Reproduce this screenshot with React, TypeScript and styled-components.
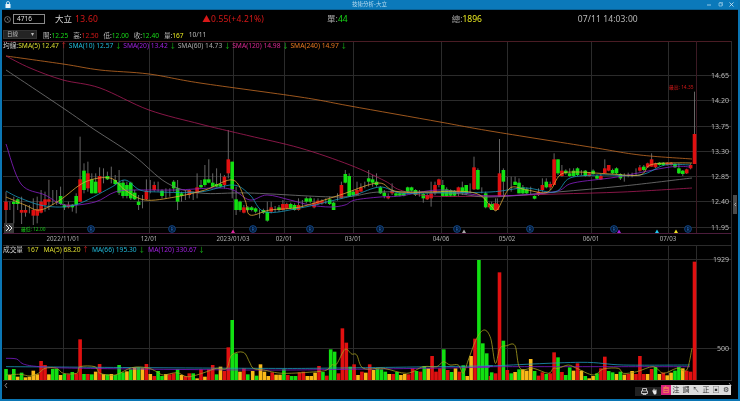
import React from "react";
import styled, { createGlobalStyle } from "styled-components";

const Global = createGlobalStyle`
  html, body { margin: 0; padding: 0; background: #000; }
  body { width: 740px; height: 401px; overflow: hidden; }
`;

const FONT = `"Noto Sans", "Noto Sans CJK TC", sans-serif`;

const Win = styled.div`
  width: 740px;
  height: 401px;
  box-sizing: border-box;
  border: solid #0b76b4;
  border-width: 0 2px 2px 2px;
  background: #000;
  display: flex;
  flex-direction: column;
  font-family: ${FONT};
  filter: blur(0.3px);
  overflow: hidden;
`;

const TitleBar = styled.div`
  height: 10px;
  flex: none;
  background: #0b79ba;
  border-bottom: 1px solid #0a5f92;
  box-sizing: border-box;
  display: flex;
  align-items: center;
  padding: 0 3px;
  color: #b9dcf0;
  font-size: 5.5px;
  position: relative;
`;

const TitleText = styled.div`
  flex: 1;
  text-align: center;
  line-height: 9px;
  padding-left: 21px;
`;

const WinButtons = styled.div`
  display: flex;
  gap: 6px;
  align-items: center;
  padding-right: 1px;
`;

const Header = styled.div`
  height: 18px;
  flex: none;
  display: flex;
  align-items: center;
  font-size: 8.5px;
`;

const Clock = styled.svg`
  margin-left: 2px;
  flex: none;
`;

const CodeBox = styled.div`
  width: 32px;
  height: 10px;
  margin-left: 2px;
  border: 1px solid #8a8a8a;
  box-sizing: border-box;
  color: #ddd;
  font-size: 6.5px;
  line-height: 8px;
  padding-left: 3px;
`;

const HeadText = styled.span<{ $x: number; $c?: string; $ls?: number }>`
  margin-left: ${(p) => p.$x}px;
  color: ${(p) => p.$c ?? "#d8d8d8"};
  letter-spacing: ${(p) => p.$ls ?? 0}px;
  white-space: nowrap;
  flex: none;
  line-height: 12px;
`;

const Colored = styled.span<{ $c: string }>`
  color: ${(p) => p.$c};
`;

const Quote = styled.div`
  height: 13px;
  flex: none;
  display: flex;
  align-items: center;
  font-size: 6.6px;
  padding-left: 1px;
  color: #bbb;
`;

const Select = styled.div`
  width: 34px;
  height: 9px;
  box-sizing: border-box;
  background: #242424;
  border: 1px solid #333;
  color: #bbb;
  font-size: 5.5px;
  line-height: 7px;
  padding-left: 3px;
  display: flex;
  justify-content: space-between;
  padding-right: 2px;
  margin-right: 6px;
  flex: none;
`;

const QuoteItem = styled.span`
  white-space: nowrap;
  margin-right: 5px;
`;

const Panel = styled.div`
  position: relative;
  flex: 1;
  min-height: 0;
`;

const ChartSvg = styled.svg`
  display: block;
  font-family: ${FONT};
`;

const Legend = styled.div<{ $top: number; $gap: number }>`
  position: absolute;
  left: 1px;
  top: ${(p) => p.$top}px;
  display: flex;
  gap: ${(p) => p.$gap}px;
  font-size: 6.7px;
  line-height: 9px;
  color: #ccc;
  white-space: nowrap;
`;

const LegendLabel = styled.span`
  margin-right: -1.5px;
`;

const VolumeValue = styled.span`
  color: #dcdc30;
  margin: 0 2px 0 1px;
`;

const Tools = styled.div`
  position: absolute;
  right: 7px;
  bottom: 4px;
  display: flex;
  align-items: center;
  height: 11px;
`;

const ToolDark = styled.div`
  display: flex;
  align-items: center;
  gap: 3px;
  background: #202020;
  height: 9px;
  padding: 0 3px 0 4px;
  width: 26px;
  box-sizing: border-box;
  margin-top: 3px;
  justify-content: flex-end;
`;

const ToolButton = styled.div<{ $pink?: boolean }>`
  width: 10px;
  height: 10px;
  background: ${(p) => (p.$pink ? "#d8247c" : "#dcdcdc")};
  color: ${(p) => (p.$pink ? "#ffb040" : "#333")};
  font-size: 7px;
  line-height: 10px;
  text-align: center;
  overflow: hidden;
`;

const R = "#e01010", G = "#12e012", O = "#f8b818";

type C = [number, number, number, number, string];

const g1: C[] = [
  [215,240,185,280,"r"],[224,228,215,240,"d"],[215,222,200,280,"g"],[208,222,205,240,"g"],[240,248,200,282,"r"],[240,248,225,260,"r"],[238,242,225,250,"d"],[240,257,205,285,"r"],[238,257,200,280,"r"],[215,248,180,250,"r"],
  [208,225,185,245,"r"],[208,215,150,240,"r"],[210,214,180,225,"d"],[210,214,180,225,"d"],[198,222,170,225,"g"],[224,232,222,240,"g"],[224,232,215,235,"r"],[224,232,222,245,"g"],[198,224,190,250,"g"],[148,215,20,215,"r"],
  [122,180,100,190,"g"],[130,175,95,185,"r"],[148,190,130,190,"g"],[155,190,130,190,"g"],[138,188,112,190,"r"],[140,144,115,160,"d"],[138,148,125,150,"g"],[148,152,110,160,"d"],[150,162,135,165,"g"],[158,188,120,195,"g"],
  [158,198,150,205,"g"],[165,198,155,205,"g"],[158,205,155,210,"g"],[188,208,180,210,"g"],[215,225,195,240,"g"],[205,210,195,235,"d"],[182,208,148,210,"r"],[178,182,150,190,"d"],[165,180,155,185,"r"],[176,180,155,185,"d"],
  [182,198,178,205,"g"],[188,192,175,205,"d"],[186,190,175,200,"d"],[155,175,150,185,"g"],[175,215,150,240,"g"],[190,198,185,215,"g"],[192,196,180,210,"d"],[180,195,178,205,"r"],[190,194,185,210,"d"],[172,190,130,205,"r"],
  [165,172,150,175,"g"],[148,165,105,170,"g"],[148,158,88,160,"g"],[158,170,130,172,"g"],[162,170,115,172,"g"],[162,170,130,172,"g"],[140,165,135,175,"r"],[88,130,0,145,"r"],[95,178,95,205,"g"],[208,240,170,255,"g"],
  [215,240,212,245,"g"],[232,248,225,250,"r"],[232,240,228,244,"g"],
];
const g2: C[] = [
  [232,240,228,244,"g"],[235,245,232,250,"g"],[242,245,238,265,"d"],[240,248,236,252,"g"],[245,272,215,275,"g"],[232,245,215,250,"r"],[236,240,228,246,"d"],[232,240,225,245,"g"],[222,240,210,242,"r"],[222,235,218,238,"r"],
  [222,235,218,238,"g"],[225,240,220,242,"g"],[225,240,205,242,"r"],[220,224,210,232,"d"],[205,215,200,220,"g"],[205,215,200,220,"g"],[218,232,205,235,"r"],[212,222,205,225,"r"],[212,220,208,224,"r"],[212,216,205,222,"d"],
  [208,222,200,225,"g"],[218,240,215,240,"g"],[200,205,190,212,"d"],[165,205,155,205,"r"],[132,158,120,160,"g"],[138,198,130,200,"g"],[185,195,180,198,"g"],[180,195,155,195,"r"],[172,185,160,185,"r"],[165,170,155,175,"d"],
  [145,155,120,170,"g"],[148,158,135,170,"g"],[155,165,130,170,"g"],[172,190,168,192,"g"],[188,198,180,205,"g"],[198,205,190,208,"r"],[182,190,160,195,"r"],[190,197,188,199,"g"],[190,197,188,199,"g"],[190,197,188,199,"g"],
  [172,185,170,188,"g"],[172,182,170,185,"g"],[180,195,178,198,"g"],[188,192,180,200,"d"],[192,205,190,218,"g"],[195,208,190,210,"r"],[190,205,155,230,"r"],[165,190,155,195,"r"],[148,165,146,172,"r"],[165,198,150,200,"g"],
  [178,198,172,200,"g"],[180,197,178,200,"g"],[182,197,180,199,"g"],[172,190,170,198,"r"],[172,190,155,195,"g"],[165,190,165,195,"g"],[176,180,160,190,"d"],[112,178,80,180,"r"],[120,178,115,180,"g"],[178,182,172,190,"d"],
  [190,232,185,235,"g"],[222,232,218,236,"r"],[222,240,220,240,"g"],[222,240,205,240,"r"],
];
const g3: C[] = [
  [223,240,215,240,"g"],[220,240,205,242,"r"],[130,200,27,200,"r"],[120,155,115,200,"g"],[160,164,140,180,"d"],[160,164,140,185,"d"],[155,165,140,165,"g"],[158,190,145,190,"g"],[172,190,165,192,"g"],[178,190,172,192,"g"],
  [180,184,170,195,"d"],[198,206,196,208,"g"],[185,195,175,198,"r"],[165,180,145,185,"r"],[155,172,145,175,"g"],[162,172,155,180,"r"],[88,165,70,165,"r"],[88,130,88,135,"g"],[122,138,105,140,"r"],[122,130,118,134,"g"],
  [130,138,115,140,"g"],[122,138,115,140,"g"],[115,135,112,138,"g"],[126,130,120,136,"d"],[122,138,120,140,"g"],[130,138,126,140,"r"],[122,132,118,134,"g"],[138,146,134,148,"g"],[138,148,132,150,"r"],[115,130,88,130,"r"],
  [105,122,105,124,"r"],[120,130,116,132,"g"],[115,130,112,132,"g"],[132,145,130,150,"g"],[134,138,130,155,"d"],[134,138,128,142,"d"],[134,138,128,142,"d"],[132,136,115,138,"d"],[112,122,105,125,"r"],[110,120,105,123,"g"],
  [100,112,98,114,"r"],[88,110,70,110,"r"],[100,112,98,114,"r"],[98,105,96,107,"g"],[98,105,96,107,"g"],[98,105,96,107,"r"],[98,105,96,107,"r"],[102,112,100,114,"g"],[115,130,100,132,"g"],[122,132,120,138,"g"],
  [118,130,116,132,"r"],[105,115,100,118,"r"],[12,102,-115,102,"r"],
];

const yc = (z: number) => 130 + z / 3;

const groups: { list: C[]; start: number }[] = [
  { list: g1, start: 6 },
  { list: g2, start: 251.7 },
  { list: g3, start: 491.7 },
];

const Candles = () => (
  <g>
    {groups.flatMap((gr, gi) =>
      gr.list.map((c, i) => {
        const x = gr.start + i * 3.9;
        const col = c[4] === "r" ? R : G;
        return (
          <g key={`${gi}-${i}`}>
            <line x1={x} x2={x} y1={yc(c[2])} y2={yc(c[3])} stroke="#707070" strokeWidth={0.9} />
            {c[4] !== "d" && <rect x={x - 1.8} width={3.6} y={yc(c[0])} height={(c[1] - c[0]) / 3} fill={col} />}
          </g>
        );
      })
    )}
  </g>
);

type V = [number, string];
const v1: V[] = [
  [387,"g"],[405,"o"],[387,"g"],[410,"o"],[398,"g"],[412,"o"],[410,"o"],[392,"o"],[403,"o"],[363,"r"],[375,"r"],[403,"o"],[387,"g"],[387,"g"],[405,"o"],[402,"g"],[403,"r"],[396,"g"],[400,"r"],[298,"r"],
  [402,"g"],[402,"r"],[403,"g"],[395,"o"],[372,"r"],[402,"o"],[403,"g"],[402,"o"],[405,"g"],[375,"g"],[397,"g"],[394,"o"],[388,"g"],[382,"o"],[382,"g"],[385,"o"],[372,"r"],[402,"o"],[408,"r"],[393,"g"],
  [408,"g"],[402,"o"],[403,"r"],[400,"r"],[388,"g"],[405,"o"],[408,"r"],[400,"r"],[400,"g"],[415,"o"],[388,"r"],[410,"o"],[388,"r"],[375,"r"],[403,"g"],[380,"o"],[393,"r"],[322,"r"],[240,"g"],[340,"g"],
  [395,"o"],[385,"r"],[403,"g"],
];
const v2: V[] = [
  [393,"o"],[407,"g"],[373,"o"],[395,"o"],[408,"o"],[397,"r"],[404,"o"],[404,"o"],[388,"g"],[405,"r"],[408,"g"],[408,"g"],[397,"r"],[395,"r"],[408,"o"],[408,"o"],[398,"o"],[378,"r"],[396,"g"],[407,"r"],
  [328,"g"],[335,"g"],[400,"r"],[265,"r"],[308,"r"],[380,"g"],[373,"r"],[405,"o"],[395,"r"],[398,"o"],[373,"r"],[390,"o"],[386,"g"],[388,"g"],[395,"g"],[402,"o"],[402,"r"],[396,"g"],[405,"o"],[402,"o"],
  [403,"r"],[385,"r"],[393,"g"],[395,"r"],[378,"g"],[385,"o"],[348,"r"],[395,"r"],[385,"r"],[328,"g"],[390,"r"],[396,"g"],[385,"o"],[395,"r"],[376,"g"],[408,"o"],[348,"o"],[296,"r"],[60,"g"],[310,"g"],
  [340,"g"],[408,"r"],
];
const v3: V[] = [
  [397,"g"],[400,"r"],[97,"r"],[302,"g"],[390,"r"],[400,"g"],[396,"o"],[388,"g"],[388,"o"],[392,"o"],[357,"o"],[393,"g"],[407,"r"],[397,"r"],[402,"g"],[400,"r"],[337,"r"],[352,"g"],[396,"r"],[405,"g"],
  [382,"g"],[392,"o"],[370,"r"],[392,"o"],[408,"g"],[415,"o"],[408,"o"],[400,"g"],[385,"r"],[350,"r"],[393,"g"],[397,"g"],[402,"o"],[395,"g"],[404,"o"],[402,"r"],[393,"o"],[402,"r"],[348,"r"],[402,"r"],
  [402,"o"],[387,"r"],[381,"g"],[402,"o"],[398,"r"],[406,"o"],[398,"o"],[392,"g"],[380,"g"],[385,"o"],[392,"r"],[395,"r"],[65,"r"],
];
const vGroups: { list: V[]; start: number }[] = [
  { list: v1, start: 6 },
  { list: v2, start: 252.7 },
  { list: v3, start: 491.7 },
];
const Volumes = () => (
  <g>
    {vGroups.flatMap((gr, gi) =>
      gr.list.map((b, i) => {
        const x = gr.start + i * 3.9;
        const y = 240 + b[0] / 3;
        return (
          <rect
            key={`${gi}-${i}`}
            x={x - 1.8}
            width={3.6}
            y={y}
            height={380 - y}
            fill={b[1] === "r" ? R : b[1] === "g" ? G : O}
          />
        );
      })
    )}
  </g>
);

// Catmull-Rom spline through the points, so averages read as curves
const smooth = (a: number[][]) => {
  let d = `M${a[0][0]} ${a[0][1]}`;
  for (let i = 0; i < a.length - 1; i++) {
    const p0 = a[Math.max(i - 1, 0)], p1 = a[i], p2 = a[i + 1], p3 = a[Math.min(i + 2, a.length - 1)];
    const c1x = p1[0] + (p2[0] - p0[0]) / 6, c1y = p1[1] + (p2[1] - p0[1]) / 6;
    const c2x = p2[0] - (p3[0] - p1[0]) / 6, c2y = p2[1] - (p3[1] - p1[1]) / 6;
    d += `C${c1x.toFixed(1)} ${c1y.toFixed(1)} ${c2x.toFixed(1)} ${c2y.toFixed(1)} ${p2[0].toFixed(1)} ${p2[1].toFixed(1)}`;
  }
  return d;
};

const priceLines: { c: string; p: number[][] }[] = [
  { c: "#c46c24", p: [[6,56],[63,64],[100,70],[149,74],[200,83],[300,97],[350,106],[440,122],[490,131],[590,147],[640,155],[692,159]] },
  { c: "#a81c58", p: [[6,56],[30,68],[63,80],[100,88],[149,110],[200,124],[233,132],[250,136],[300,148],[350,165],[385,181],[400,190],[430,196],[490,196],[557,194],[623,192],[692,188]] },
  { c: "#787878", p: [[6,70],[63,108],[95,130],[133,155],[167,183],[200,193],[250,193],[340,197],[380,192],[450,193],[490,197],[557,192],[623,186],[692,178]] },
  { c: "#8a20c8", p: [[6,144],[21,184],[45,195],[65,205],[95,202],[115,192],[135,190],[175,190],[215,188],[233,190],[250,200],[267,195],[290,200],[310,205],[330,207],[345,205],[355,200],[380,197],[400,196],[440,190],[490,196],[553,192],[573,183],[617,177],[670,167],[690,167]] },
  { c: "#1a98bc", p: [[6,191],[20,198],[45,206],[75,205],[110,188],[125,180],[140,190],[160,192],[200,192],[233,185],[250,195],[265,212],[300,208],[335,200],[355,195],[380,187],[400,193],[430,193],[490,192],[525,188],[555,192],[570,178],[600,175],[640,175],[665,165],[690,165]] },
  { c: "#e0a838", p: [[6,197],[25,205],[40,210],[60,200],[85,182],[110,178],[125,190],[145,200],[175,197],[205,190],[233,180],[245,200],[250,215],[270,210],[300,207],[340,195],[378,183],[400,192],[470,192],[490,205],[497,210],[510,188],[527,190],[548,192],[560,175],[575,172],[610,174],[640,175],[650,165],[670,163],[692,163]] },
];

const z6 = (a: number[][]) => a.map(([x, y]) => [x / 3, 240 + y / 3]);
const z7 = (a: number[][]) => a.map(([x, y]) => [250 + x / 3, 240 + y / 3]);
const z8 = (a: number[][]) => a.map(([x, y]) => [490 + x / 3, 240 + y / 3]);

const volLines: { c: string; p: number[][] }[] = [
  { c: "#1e9ac0", p: [...z6([[18,380],[750,385]]), ...z7([[270,384],[700,378]]), ...z8([[0,378],[270,367],[400,375],[600,375]])] },
  { c: "#7a1cc8", p: [...z6([[18,355],[50,357],[70,372],[120,380],[250,385],[750,390]]), ...z7([[300,388],[700,382]]), ...z8([[0,380],[600,380]])] },
  { c: "#a8a020", p: [
    ...z6([[18,405],[60,403],[90,408],[115,400],[135,385],[170,385],[190,400],[230,400],[240,380],[285,380],[300,400],[345,405],[395,383],[440,383],[470,395],[490,405],[530,398],[560,410],[590,405],[620,395],[650,385],[680,385],[695,345],[730,337],[748,365]]),
    ...z7([[10,385],[40,390],[100,400],[200,395],[230,390],[245,375],[260,372],[285,328],[305,342],[320,345],[340,385],[400,385],[470,400],[520,380],[560,380],[580,365],[600,375],[625,375],[640,400],[655,360],[680,295],[703,270],[722,295],[736,370]]),
    ...z8([[30,325],[50,317],[75,317],[90,385],[130,385],[175,400],[190,385],[205,385],[235,375],[260,385],[310,405],[340,387],[385,385],[400,400],[440,395],[490,380],[520,400],[560,385],[590,390],[606,325]]),
  ] },
];

const vlines = [63, 149, 233, 284, 353, 441, 507, 591, 668];
const hPrice: [number, string][] = [[75,"14.65"],[100,"14.20"],[126,"13.75"],[151,"13.30"],[176,"12.85"],[201,"12.40"],[227,"11.95"]];
const dates: [number, string][] = [[63,"2022/11/01"],[149,"12/01"],[233,"2023/01/03"],[284,"02/01"],[353,"03/01"],[441,"04/06"],[507,"05/02"],[591,"06/01"],[668,"07/03"]];
const rMarks = [91, 172, 253, 310, 380, 457, 530, 614, 688];
const tris: [number, string][] = [[233,"#e028a0"],[464,"#a8a8a8"],[619,"#a020e0"],[657,"#20c8f0"],[676,"#f0e020"]];

const GRID = "#2b2b2b";

const Chart = () => (
  <ChartSvg width={736} height={358} viewBox="2 41 736 358">
    {vlines.map((x) => (
      <g key={x} stroke={GRID} strokeWidth={1}>
        <line x1={x + 0.5} x2={x + 0.5} y1={41} y2={233} />
        <line x1={x + 0.5} x2={x + 0.5} y1={245} y2={380} />
      </g>
    ))}
    {hPrice.map(([y]) => (
      <line key={y} x1={3} x2={732} y1={y + 0.5} y2={y + 0.5} stroke={GRID} />
    ))}
    <line x1={3} x2={732} y1={41.5} y2={41.5} stroke="#4a1c24" />
    <line x1={3} x2={732} y1={233.5} y2={233.5} stroke="#4c1c3c" />
    <line x1={3} x2={732} y1={245.5} y2={245.5} stroke={GRID} />
    <line x1={3} x2={732} y1={259.5} y2={259.5} stroke={GRID} />
    <line x1={3} x2={732} y1={348.5} y2={348.5} stroke={GRID} />
    <line x1={3} x2={732} y1={380.5} y2={380.5} stroke="#303030" />
    <line x1={696.5} x2={696.5} y1={41} y2={233} stroke="#3c1a24" />
    <line x1={696.5} x2={696.5} y1={245} y2={380} stroke={GRID} />
    <line x1={731.5} x2={731.5} y1={41} y2={380} stroke={GRID} />

    <Candles />
    {priceLines.map((l, i) => (
      <path key={i} d={smooth(l.p)} fill="none" stroke={l.c} strokeWidth={0.8} />
    ))}

    {hPrice.map(([y, t]) => (
      <text key={t} x={711} y={y + 2.5} fontSize={7} fill="#b8b8b8">{t}</text>
    ))}
    {dates.map(([x, t]) => (
      <text key={t} x={x} y={241} fontSize={6.2} fill="#b0b0b0" textAnchor="middle">{t}</text>
    ))}

    {rMarks.map((x) => (
      <g key={x}>
        <circle cx={x} cy={229} r={3.4} fill="#041830" stroke="#14509c" strokeWidth={0.8} />
        <text x={x} y={231} fontSize={5} fill="#2466b8" textAnchor="middle">R</text>
      </g>
    ))}
    {tris.map(([x, c]) => (
      <polygon key={x} points={`${x - 2},233 ${x + 2},233 ${x},229.5`} fill={c} />
    ))}

    <rect x={4} y={223} width={10} height={10} fill="#3a3a3a" />
    <path d="M6 225l3 3-3 3M9 225l3 3-3 3" fill="none" stroke="#e8e8e8" strokeWidth={1} />
    <text x={21} y={230.5} fontSize={4.8} fill="#18c818">最低: 12.00</text>
    <text x={669} y={89} fontSize={4.8} fill="#d01818">最高: 14.35</text>

    <Volumes />
    {volLines.map((l, i) => (
      <path key={i} d={smooth(l.p)} fill="none" stroke={l.c} strokeWidth={0.8} />
    ))}
    <text x={713} y={262} fontSize={7} fill="#b8b8b8">1929</text>
    <text x={717} y={351} fontSize={7} fill="#b8b8b8">500</text>

    <rect x={733} y={195} width={4} height={19} fill="#4a4a4a" />
    <path d="M736 203l-1.5 1.5 1.5 1.5" fill="none" stroke="#ddd" strokeWidth={0.6} />
    <path d="M7 383l-2 2.5 2 2.5" fill="none" stroke="#aaa" strokeWidth={0.8} />
    <path d="M729 383l2 2.5-2 2.5" fill="none" stroke="#aaa" strokeWidth={0.8} />
  </ChartSvg>
);

const SMA = [
  { t: "SMA(5) 12.47", c: "#dcdc30", a: "↑", ac: "#e02020" },
  { t: "SMA(10) 12.57", c: "#20b8d8", a: "↓", ac: "#18c818" },
  { t: "SMA(20) 13.42", c: "#a020e0", a: "↓", ac: "#18c818" },
  { t: "SMA(60) 14.73", c: "#a8a8a8", a: "↓", ac: "#18c818" },
  { t: "SMA(120) 14.98", c: "#d82890", a: "↓", ac: "#18c818" },
  { t: "SMA(240) 14.97", c: "#e87820", a: "↓", ac: "#18c818" },
];
const VOLS = [
  { t: "MA(5) 68.20", c: "#dcdc30", a: "↑", ac: "#e02020" },
  { t: "MA(66) 195.30", c: "#20b8d8", a: "↓", ac: "#18c818" },
  { t: "MA(120) 330.67", c: "#a020e0", a: "↓", ac: "#18c818" },
];

export default function App() {
  return (
    <>
      <Global />
      <Win>
        <TitleBar>
          <svg width="6" height="7" viewBox="0 0 6 7">
            <rect x="0.5" y="3" width="5" height="4" fill="#e8f4fa" />
            <path d="M1.5 3V2a1.5 1.5 0 0 1 3 0v1" fill="none" stroke="#e8f4fa" strokeWidth="0.8" />
          </svg>
          <TitleText>技術分析-大立</TitleText>
          <WinButtons>
            <svg width="5" height="5" viewBox="0 0 5 5"><path d="M0 3h4" stroke="#b9dcf0" strokeWidth="0.8" /></svg>
            <svg width="5" height="5" viewBox="0 0 5 5"><path d="M1 1h3v3H1zM2 1V0h3v3H4" fill="none" stroke="#b9dcf0" strokeWidth="0.6" /></svg>
            <svg width="5" height="5" viewBox="0 0 5 5"><path d="M0.5 0.5l4 4M4.5 0.5l-4 4" stroke="#d8ecf6" strokeWidth="0.8" /></svg>
          </WinButtons>
        </TitleBar>
        <Header>
          <Clock width="7" height="7" viewBox="0 0 7 7">
            <circle cx="3.5" cy="3.5" r="2.9" fill="none" stroke="#999" strokeWidth="0.7" />
            <path d="M3.5 2v1.6l1.2.6" fill="none" stroke="#999" strokeWidth="0.6" />
          </Clock>
          <CodeBox>4716</CodeBox>
          <HeadText $x={10}>大立</HeadText>
          <HeadText $x={3} $c="#d81818" $ls={0.3}>13.60</HeadText>
          <HeadText $x={104} $c="#d81818" $ls={0.2}>▲0.55(+4.21%)</HeadText>
          <HeadText $x={63} $c="#aaa">單:<Colored $c="#18d818">44</Colored></HeadText>
          <HeadText $x={104} $c="#aaa">總:<Colored $c="#e8e820">1896</Colored></HeadText>
          <HeadText $x={96} $c="#b8b8b8" $ls={0.1}>07/11 14:03:00</HeadText>
        </Header>
        <Quote>
          <Select>日線<span>▾</span></Select>
          <QuoteItem>開:<Colored $c="#18d818">12.25</Colored></QuoteItem>
          <QuoteItem>高:<Colored $c="#d81818">12.50</Colored></QuoteItem>
          <QuoteItem>低:<Colored $c="#18d818">12.00</Colored></QuoteItem>
          <QuoteItem>收:<Colored $c="#18d818">12.40</Colored></QuoteItem>
          <QuoteItem>量:<Colored $c="#e8e820">167</Colored></QuoteItem>
          <QuoteItem>10/11</QuoteItem>
        </Quote>
        <Panel>
          <Chart />
          <Legend $top={0} $gap={1.5}>
            <LegendLabel>均線:</LegendLabel>
            {SMA.map((s) => (
              <span key={s.t}>
                <Colored $c={s.c}>{s.t}</Colored> <Colored $c={s.ac}>{s.a}</Colored>
              </span>
            ))}
          </Legend>
          <Legend $top={204} $gap={3}>
            <span>成交量</span>
            <VolumeValue>167</VolumeValue>
            {VOLS.map((s) => (
              <span key={s.t}>
                <Colored $c={s.c}>{s.t}</Colored> <Colored $c={s.ac}>{s.a}</Colored>
              </span>
            ))}
          </Legend>
          <Tools>
            <ToolDark>
              <svg width="7" height="7" viewBox="0 0 7 7"><path d="M1.5 3V.5h4V3M.5 3h6v2.5h-6zM2 5v1.5h3V5" fill="none" stroke="#e0e0e0" strokeWidth="0.8" /></svg>
              <svg width="7" height="7" viewBox="0 0 7 7"><path d="M1.5 3.5V2l1 .5V.8h1V2.5h1V1.5h1V5a1.5 1.5 0 0 1-1.5 1.5H3z" fill="#e8e8e8" /></svg>
            </ToolDark>
            <ToolButton $pink>自</ToolButton>
            <ToolButton>注</ToolButton>
            <ToolButton>調</ToolButton>
            <ToolButton>↖</ToolButton>
            <ToolButton>正</ToolButton>
            <ToolButton>▣</ToolButton>
            <ToolButton>⚙</ToolButton>
          </Tools>
        </Panel>
      </Win>
    </>
  );
}
